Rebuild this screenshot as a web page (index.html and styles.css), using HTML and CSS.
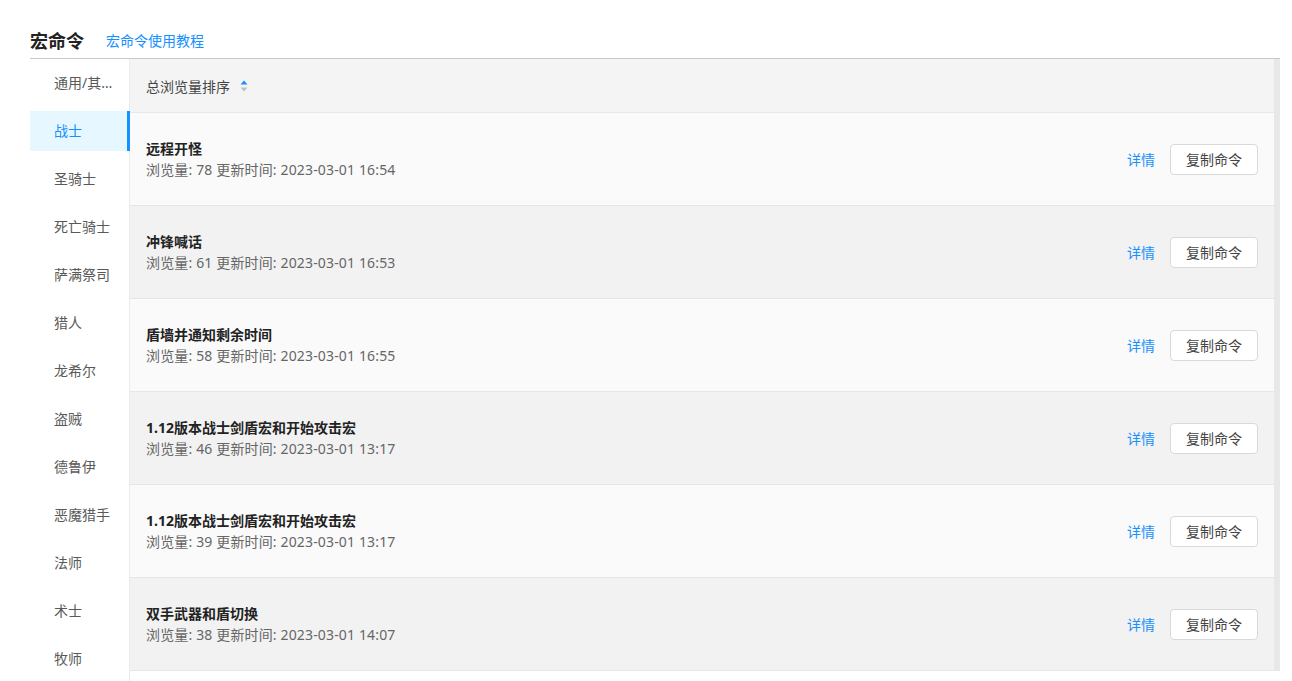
FILE: index.html
```html
<!DOCTYPE html>
<html lang="zh">
<head>
<meta charset="utf-8">
<title>宏命令</title>
<link rel="stylesheet" href="styles.css">
</head>
<body>
<div class="page">
  <div class="page-head">
    <h1 class="page-title">宏命令</h1>
    <a class="page-link" href="#">宏命令使用教程</a>
  </div>
  <div class="layout">
    <ul class="menu">
      <li class="menu-item">通用/其他宏命令</li>
      <li class="menu-item active">战士</li>
      <li class="menu-item">圣骑士</li>
      <li class="menu-item">死亡骑士</li>
      <li class="menu-item">萨满祭司</li>
      <li class="menu-item">猎人</li>
      <li class="menu-item">龙希尔</li>
      <li class="menu-item">盗贼</li>
      <li class="menu-item">德鲁伊</li>
      <li class="menu-item">恶魔猎手</li>
      <li class="menu-item">法师</li>
      <li class="menu-item">术士</li>
      <li class="menu-item">牧师</li>
    </ul>
    <div class="list">
      <div class="list-head">
        <span class="sort-label">总浏览量排序</span>
        <span class="sorter">
          <svg width="8" height="12" viewBox="0 0 8 12"><path d="M4 0.5 L7.5 4.5 L0.5 4.5 Z" fill="#1890ff"/><path d="M4 11.5 L7.5 7.5 L0.5 7.5 Z" fill="#bfbfbf"/></svg>
        </span>
      </div>
      <div class="row">
        <div class="row-info"><div class="row-title">远程开怪</div><div class="row-meta">浏览量: 78 更新时间: 2023-03-01 16:54</div></div>
        <a class="row-detail" href="#">详情</a><button class="btn">复制命令</button>
      </div>
      <div class="row alt">
        <div class="row-info"><div class="row-title">冲锋喊话</div><div class="row-meta">浏览量: 61 更新时间: 2023-03-01 16:53</div></div>
        <a class="row-detail" href="#">详情</a><button class="btn">复制命令</button>
      </div>
      <div class="row">
        <div class="row-info"><div class="row-title">盾墙并通知剩余时间</div><div class="row-meta">浏览量: 58 更新时间: 2023-03-01 16:55</div></div>
        <a class="row-detail" href="#">详情</a><button class="btn">复制命令</button>
      </div>
      <div class="row alt">
        <div class="row-info"><div class="row-title">1.12版本战士剑盾宏和开始攻击宏</div><div class="row-meta">浏览量: 46 更新时间: 2023-03-01 13:17</div></div>
        <a class="row-detail" href="#">详情</a><button class="btn">复制命令</button>
      </div>
      <div class="row">
        <div class="row-info"><div class="row-title">1.12版本战士剑盾宏和开始攻击宏</div><div class="row-meta">浏览量: 39 更新时间: 2023-03-01 13:17</div></div>
        <a class="row-detail" href="#">详情</a><button class="btn">复制命令</button>
      </div>
      <div class="row alt">
        <div class="row-info"><div class="row-title">双手武器和盾切换</div><div class="row-meta">浏览量: 38 更新时间: 2023-03-01 14:07</div></div>
        <a class="row-detail" href="#">详情</a><button class="btn">复制命令</button>
      </div>
    </div>
  </div>
</div>
</body>
</html>
```
FILE: styles.css
```css
html, body {
  margin: 0;
  padding: 0;
  height: 100%;
  overflow: hidden;
  background: #fff;
}
body {
  font-family: "Noto Sans", "Noto Sans CJK SC", sans-serif;
  font-size: 14px;
  color: #333;
}
.page {
  padding: 0 12px 0 30px;
}
.page-head {
  display: flex;
  align-items: center;
  padding: 29px 0 5px;
  border-bottom: 1px solid #c9c9c9;
}
.page-title {
  margin: 0;
  font-size: 18px;
  line-height: 24px;
  font-weight: 700;
  color: #222;
}
.page-link {
  margin-left: 22px;
  font-size: 14px;
  line-height: 24px;
  color: #1890ff;
  text-decoration: none;
}
.layout {
  display: flex;
  align-items: flex-start;
}
.menu {
  list-style: none;
  margin: 0;
  padding: 0;
  width: 99px;
  flex: none;
  border-right: 1px solid #ebebeb;
}
.menu-item {
  height: 40px;
  line-height: 40px;
  margin: 4px 0 8px;
  padding: 0 14px 0 24px;
  color: #595959;
  white-space: nowrap;
  overflow: hidden;
  text-overflow: ellipsis;
}
.menu-item.active {
  background: #e6f7ff;
  color: #1890ff;
  margin-right: -1px;
  box-shadow: inset -3px 0 0 #1890ff;
}
.list {
  flex: 1;
  min-width: 0;
}
.list-head {
  display: flex;
  align-items: center;
  height: 53px;
  padding-left: 16px;
  background: #f4f4f4;
  border-bottom: 1px solid #e8e8e8;
  border-right: 6px solid #e8e8e8;
  font-size: 14px;
  color: #444;
}
.sorter {
  display: inline-flex;
  margin-left: 10px;
  margin-top: 1px;
}
.row {
  display: flex;
  align-items: center;
  height: 92px;
  padding: 0 16px;
  background: #fafafa;
  border-bottom: 1px solid #e6e6e6;
  border-right: 6px solid #e8e8e8;
}
.row.alt {
  background: #f2f2f2;
}
.row-info {
  flex: 1;
  min-width: 0;
  padding-top: 2px;
}
.row-title {
  font-size: 14px;
  line-height: 20px;
  font-weight: 700;
  color: #222;
}
.row-meta {
  font-size: 14px;
  line-height: 22px;
  letter-spacing: 0.15px;
  color: #666;
}
.row-detail {
  color: #1890ff;
  text-decoration: none;
  font-size: 14px;
  margin-right: 15px;
}
.btn {
  height: 31px;
  padding: 0 15px;
  font-family: inherit;
  font-size: 14px;
  color: #444;
  background: #fff;
  border: 1px solid #d9d9d9;
  border-radius: 4px;
}
```
